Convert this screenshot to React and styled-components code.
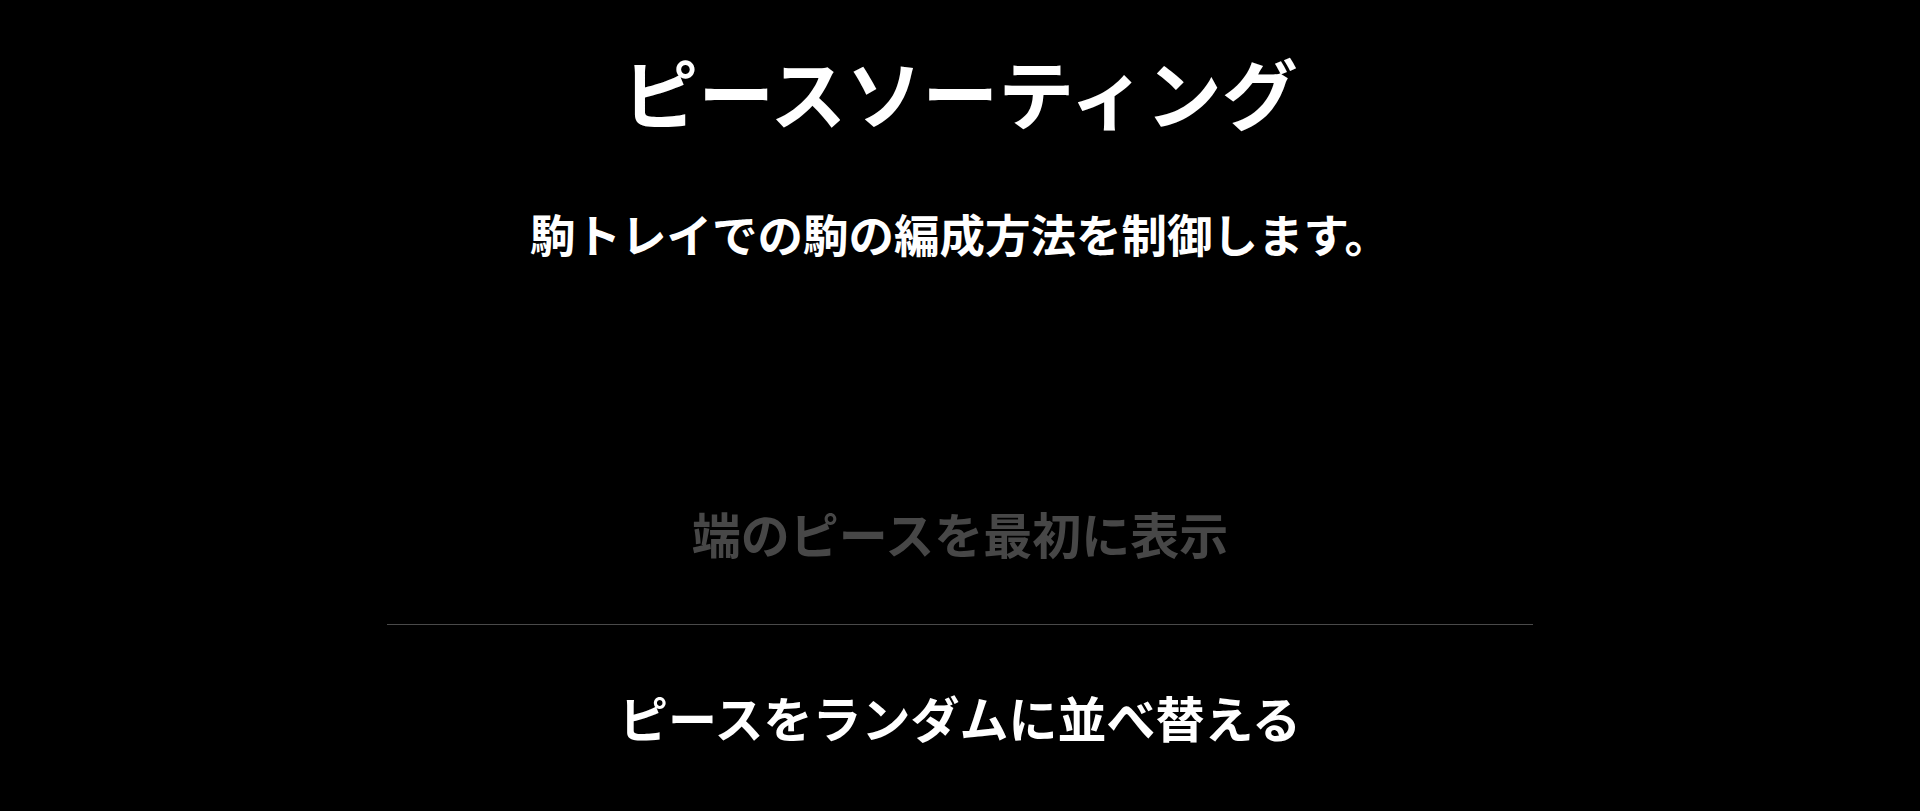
import styled, { createGlobalStyle } from "styled-components"

const GlobalStyle = createGlobalStyle`
    html, body {
        margin: 0;
        padding: 0;
        background-color: #000000;
    }
    body {
        font-family: "Noto Sans CJK JP", "Noto Sans", sans-serif;
        color: #ffffff;
    }
`

const Page = styled.div`
    display: flex;
    flex-direction: column;
    align-items: center;
    min-height: 811px;
    padding-top: 53px;
    box-sizing: border-box;
`

const Title = styled.h1`
    margin: 0;
    font-size: 76px;
    line-height: 1;
    font-weight: 700;
    color: #ffffff;
`

const Description = styled.p`
    margin: 82px 0 0 0;
    font-size: 45.5px;
    line-height: 1;
    font-weight: 700;
    color: #ffffff;
`

const OptionList = styled.ul`
    list-style: none;
    margin: 251.5px 0 0 0;
    padding: 0;
    width: 1146px;
    display: flex;
    flex-direction: column;
`

const Option = styled.li`
    display: flex;
    justify-content: center;
    font-size: 49px;
    line-height: 1;
    font-weight: 700;
    color: ${({ $active }) => ($active ? "#ffffff" : "#474747")};
    padding-bottom: ${({ $last }) => ($last ? "0" : "67px")};
    padding-top: ${({ $first }) => ($first ? "0" : "67px")};
    border-bottom: ${({ $last }) => ($last ? "none" : "1px solid #4a4a4a")};
`

const options = [
    { label: "端のピースを最初に表示", active: false },
    { label: "ピースをランダムに並べ替える", active: true },
]

function App() {
    return (
        <Page>
            <GlobalStyle />
            <Title>ピースソーティング</Title>
            <Description>駒トレイでの駒の編成方法を制御します。</Description>
            <OptionList>
                {options.map((option, index) => (
                    <Option
                        key={option.label}
                        $active={option.active}
                        $first={index === 0}
                        $last={index === options.length - 1}
                    >
                        {option.label}
                    </Option>
                ))}
            </OptionList>
        </Page>
    )
}

export default App
